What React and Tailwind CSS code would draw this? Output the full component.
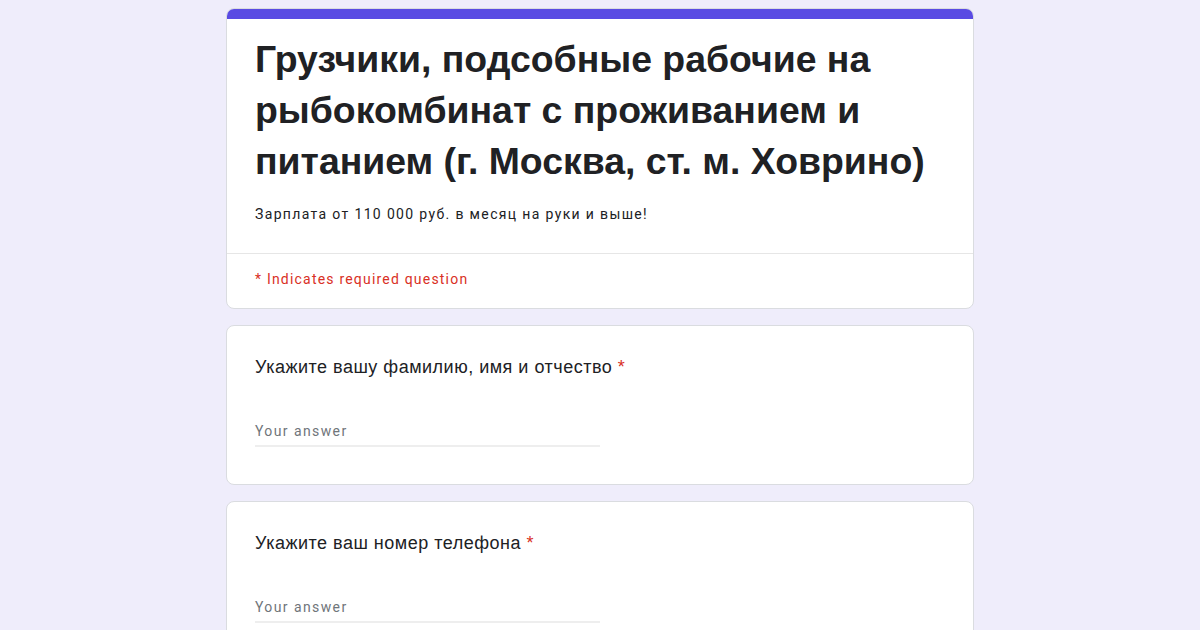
export default function App() {
  const questions = ['Укажите вашу фамилию, имя и отчество', 'Укажите ваш номер телефона']

  return (
    <div className="min-h-screen bg-[#efedfb] pt-2 pb-6">
      <div className="mx-auto flex w-[748px] flex-col gap-4">
        <div className="overflow-hidden rounded-lg border border-[#dadce0] bg-white">
          <div className="-mx-px -mt-px h-[11px] bg-[#5a4be3]"></div>
          <div className="border-b border-[#e6e6e6] px-[28px] pt-[15px] pb-[29px]">
            <h1
              className="text-[37.4px] font-bold leading-[51px] text-[#202124]"
              style={{ fontFamily: '"Liberation Sans", Arial, sans-serif' }}
            >
              Грузчики, подсобные рабочие на рыбокомбинат с проживанием и питанием (г. Москва, ст. м. Ховрино)
            </h1>
            <p
              className="mt-[17px] text-[14px] leading-5 tracking-[1.35px] text-[#202124]"
              style={{ fontFamily: 'Roboto, sans-serif' }}
            >
              Зарплата от 110 000 руб. в месяц на руки и выше!
            </p>
          </div>
          <div
            className="px-[28px] pt-[15px] pb-[19px] text-[14px] leading-5 tracking-[1.2px] text-[#d93025]"
            style={{ fontFamily: 'Roboto, sans-serif' }}
          >
            * Indicates required question
          </div>
        </div>

        {questions.map((q) => (
          <div key={q} className="rounded-lg border border-[#dadce0] bg-white px-[28px] pt-[29px] pb-[37px]">
            <div
              className="text-[18px] leading-6 tracking-[0.5px] text-[#202124]"
              style={{ fontFamily: '"Liberation Sans", Arial, sans-serif' }}
            >
              {q} <span className="text-[#d93025]">*</span>
            </div>
            <div className="mt-[42px] w-[345px] border-b-2 border-[#eeeeee] pb-[4px]">
              <div
                className="text-[14px] leading-5 tracking-[1.4px] text-[#70757a]"
                style={{ fontFamily: 'Roboto, sans-serif' }}
              >
                Your answer
              </div>
            </div>
          </div>
        ))}
      </div>
    </div>
  )
}
